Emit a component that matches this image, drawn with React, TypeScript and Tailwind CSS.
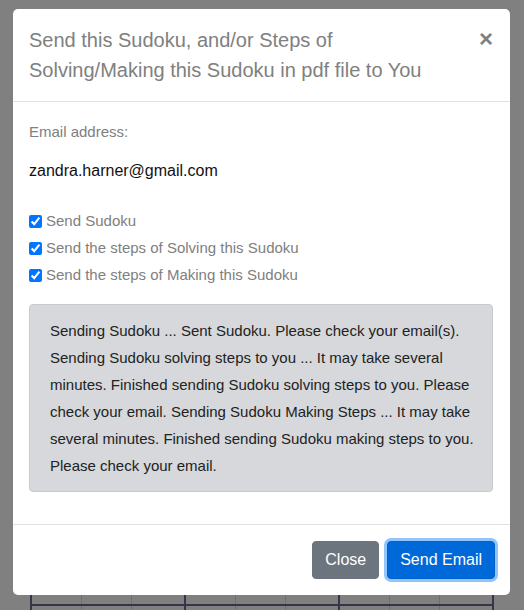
import React from "react";

const font = { fontFamily: '"Liberation Sans", Arial, sans-serif' };

const options = [
  "Send Sudoku",
  "Send the steps of Solving this Sudoku",
  "Send the steps of Making this Sudoku",
];

function BoardStrip() {
  // the bit of the sudoku board that peeks out under the dialog
  const block = (
    <div className="flex h-full w-[154px] border-r-2 border-[#34344a]">
      <div className="h-full w-[50px] border-r border-[#6e6e78]" />
      <div className="h-full w-[50px] border-r border-[#6e6e78]" />
      <div className="h-full w-[50px]" />
    </div>
  );
  return (
    <div className="ml-[30px] w-[464px] border-l-2 border-[#34344a]">
      <div className="flex h-[11px] border-b-2 border-[#34344a]">
        {block}
        {block}
        {block}
      </div>
      <div className="flex h-[10px]">
        {block}
        {block}
        {block}
      </div>
    </div>
  );
}

export default function App() {
  return (
    <div
      className="h-[610px] overflow-hidden bg-[#808080] pt-[9px]"
      style={font}
    >
      <div className="ml-[13px] w-[497px] rounded-[5px] bg-white">
        <div className="flex items-start border-b border-[#dee2e6] p-4">
          <h5 className="flex-1 text-[20px] leading-[30px] text-[#808080]">
            Send this Sudoku, and/or Steps of
            <br />
            Solving/Making this Sudoku in pdf file to You
          </h5>
          <button
            type="button"
            className="-mt-[1px] mr-[1px] text-[24px] font-bold leading-[30px] text-[#808080]"
          >
            ×
          </button>
        </div>

        <div className="pb-[32px] pl-4 pr-[17px] pt-[18px]">
          <p className="text-[15px] leading-6 text-[#808080]">
            Email address:
          </p>
          <p className="mt-[15px] text-base leading-6 text-[#111]">
            zandra.harner@gmail.com
          </p>
          <div className="mt-[25px]">
            {options.map((label) => (
              <label
                key={label}
                className="flex h-[27px] items-center gap-1 text-[15px] text-[#808080]"
              >
                <input
                  type="checkbox"
                  defaultChecked
                  className="m-0 h-[13px] w-[13px] accent-[#0075ff]"
                />
                {label}
              </label>
            ))}
          </div>
          <div className="mt-[15px] rounded border border-[#c8cacd] bg-[#d6d8db] py-3 pl-5 pr-3 text-[15px] leading-[27px] text-[#222]">
            Sending Sudoku ... Sent Sudoku. Please check your email(s).
            Sending Sudoku solving steps to you ... It may take several
            minutes. Finished sending Sudoku solving steps to you. Please
            check your email. Sending Sudoku Making Steps ... It may take
            several minutes. Finished sending Sudoku making steps to you.
            Please check your email.
          </div>
        </div>

        <div className="flex justify-end gap-2 border-t border-[#dee2e6] py-4 pl-4 pr-[15px]">
          <button
            type="button"
            className="h-[38px] rounded border border-[#6c757d] bg-[#6c757d] px-3 text-base text-white"
          >
            Close
          </button>
          <button
            type="button"
            className="h-[38px] rounded border border-[#0062cc] bg-[#0069d9] px-3 text-base text-white ring-[3px] ring-[#93c5fd]"
          >
            Send Email
          </button>
        </div>
      </div>
      <BoardStrip />
    </div>
  );
}
